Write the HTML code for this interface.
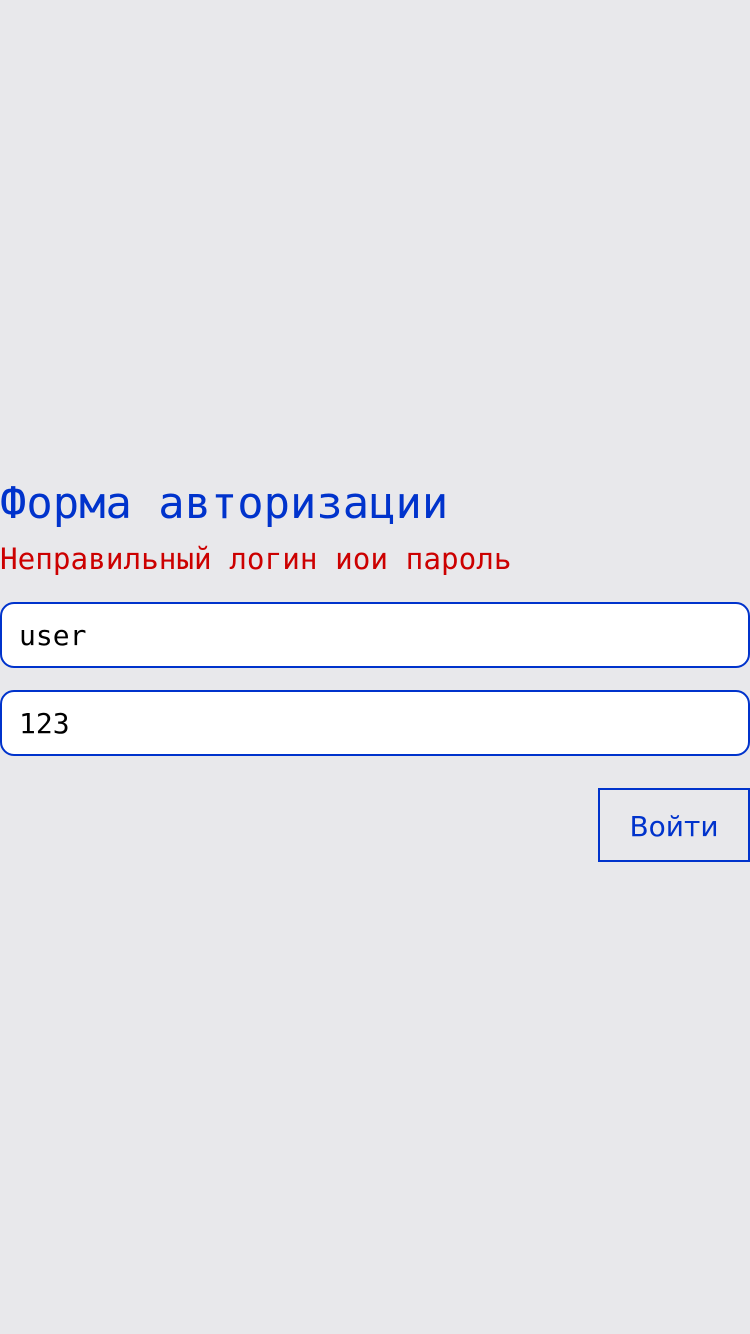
<!DOCTYPE html>
<html><head><meta charset="utf-8"><style>
html,body{margin:0;width:750px;height:1334px;background:#e8e8eb;overflow:hidden;font-family:"DejaVu Sans Mono","Liberation Mono",monospace}
.t{position:absolute;left:0;top:476px;font-size:43.8px;color:#0033cc;line-height:56px;white-space:pre}
.e{position:absolute;left:0;top:541px;font-size:29.3px;color:#cc0000;line-height:36px;white-space:pre}
.i{position:absolute;left:0;width:746px;height:62px;border:2px solid #0033cc;border-radius:14px;background:#fff;box-sizing:content-box;font-size:28px;line-height:64px;padding-left:0}
.i span{margin-left:17px}
.b{position:absolute;left:598px;top:788px;width:148px;height:70px;border:2px solid #0033cc;font-family:"DejaVu Sans",sans-serif;font-size:28px;color:#0033cc;text-align:center;line-height:74px}
</style></head><body>
<div class="t">Форма авторизации</div>
<div class="e">Неправильный логин иои пароль</div>
<div class="i" style="top:602px"><span>user</span></div>
<div class="i" style="top:690px"><span>123</span></div>
<div class="b">Войти</div>
</body></html>
